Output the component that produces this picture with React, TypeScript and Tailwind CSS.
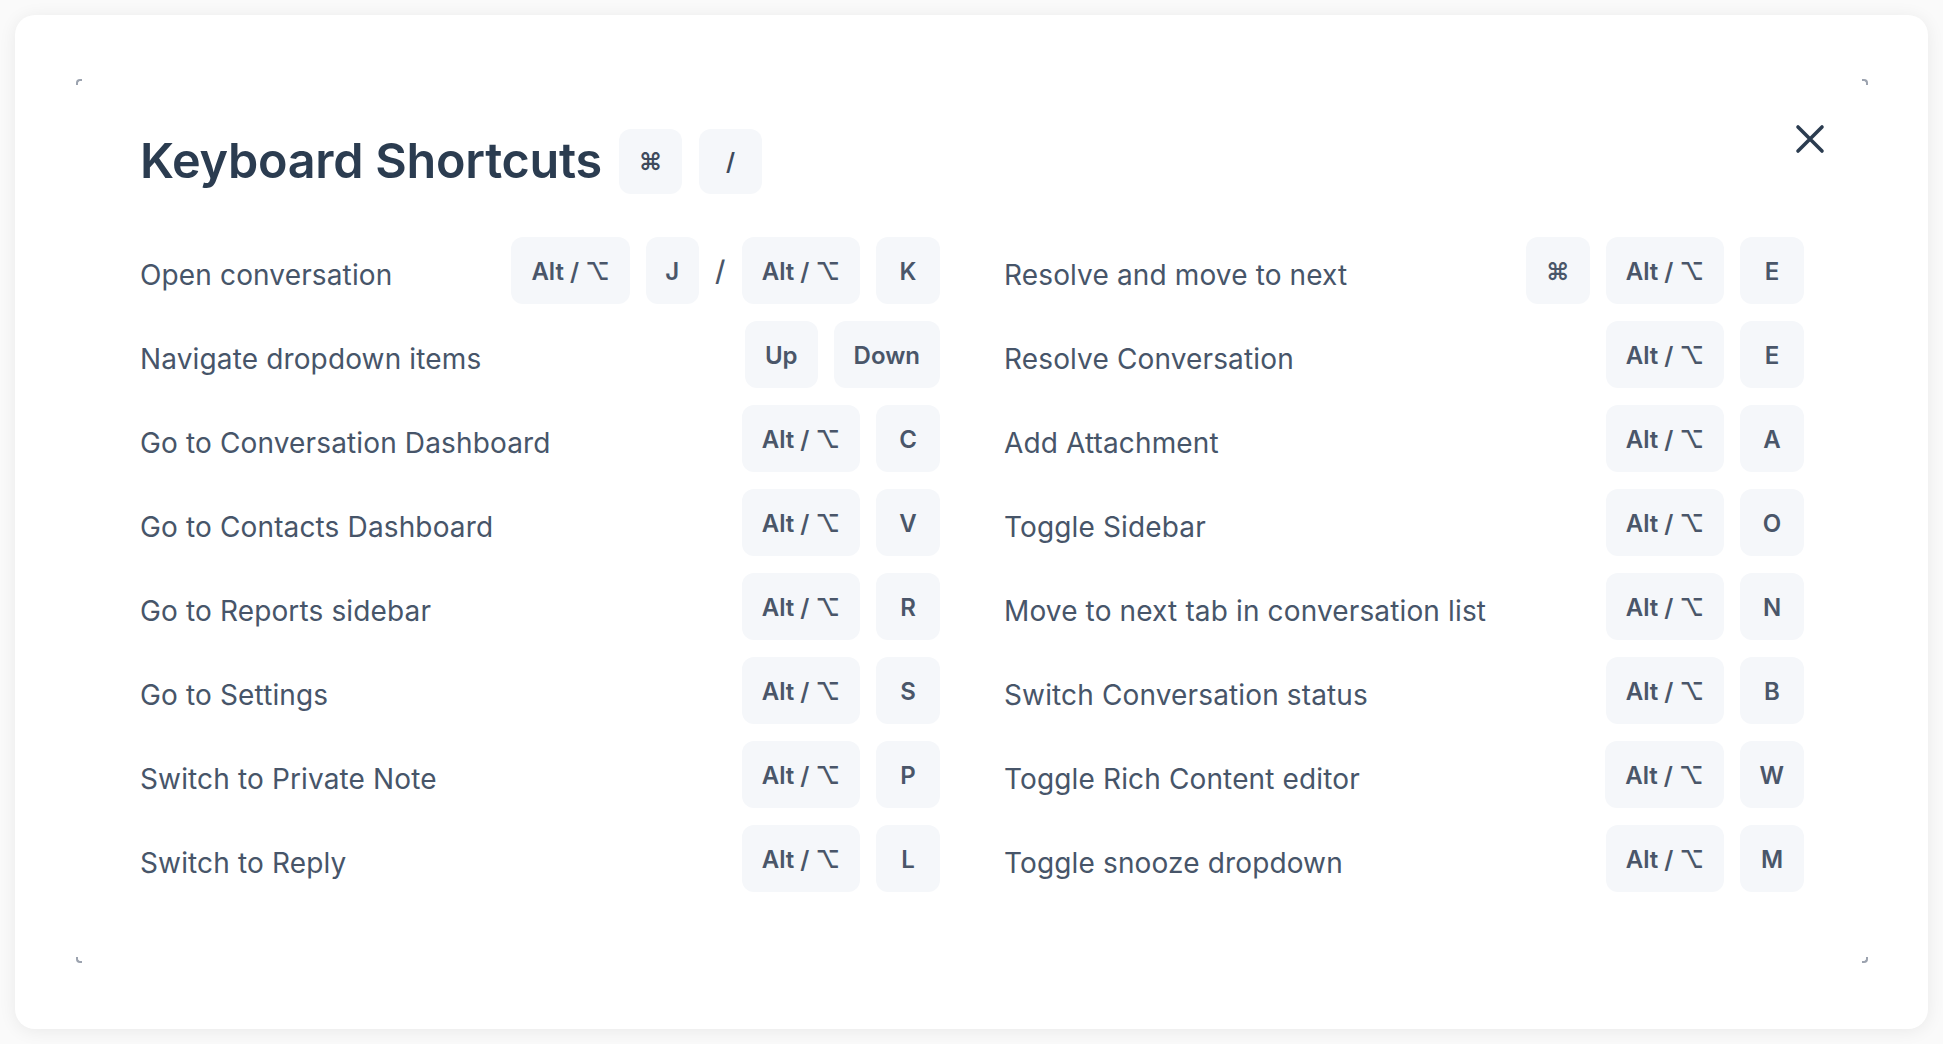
import { type ReactNode } from "react";

type Row = { label: string; keys: ReactNode };

const font = { fontFamily: "Inter, 'Noto Sans', sans-serif" };

function Key({ children, narrow }: { children: ReactNode; narrow?: boolean }) {
  return (
    <span
      className={
        "flex h-[67px] items-center justify-center rounded-[12px] bg-[#f5f7fa] pt-[2px] text-[24px] font-semibold text-[#4a5669] " +
        (narrow ? "w-[53px]" : "min-w-[64px] px-[20px]")
      }
    >
      {children}
    </span>
  );
}

const ALT = "Alt / ⌥";

function altKey(letter: string) {
  return (
    <>
      <Key>{ALT}</Key>
      <Key>{letter}</Key>
    </>
  );
}

const LEFT: Row[] = [
  {
    label: "Open conversation",
    keys: (
      <>
        <Key>{ALT}</Key>
        <Key narrow>J</Key>
        <span className="w-[11px] text-center text-[28px] font-medium text-[#4a5669]">/</span>
        <Key>{ALT}</Key>
        <Key>K</Key>
      </>
    ),
  },
  {
    label: "Navigate dropdown items",
    keys: (
      <>
        <Key>Up</Key>
        <Key>Down</Key>
      </>
    ),
  },
  { label: "Go to Conversation Dashboard", keys: altKey("C") },
  { label: "Go to Contacts Dashboard", keys: altKey("V") },
  { label: "Go to Reports sidebar", keys: altKey("R") },
  { label: "Go to Settings", keys: altKey("S") },
  { label: "Switch to Private Note", keys: altKey("P") },
  { label: "Switch to Reply", keys: altKey("L") },
];

const RIGHT: Row[] = [
  {
    label: "Resolve and move to next",
    keys: (
      <>
        <Key>⌘</Key>
        <Key>{ALT}</Key>
        <Key>E</Key>
      </>
    ),
  },
  { label: "Resolve Conversation", keys: altKey("E") },
  { label: "Add Attachment", keys: altKey("A") },
  { label: "Toggle Sidebar", keys: altKey("O") },
  { label: "Move to next tab in conversation list", keys: altKey("N") },
  { label: "Switch Conversation status", keys: altKey("B") },
  { label: "Toggle Rich Content editor", keys: altKey("W") },
  { label: "Toggle snooze dropdown", keys: altKey("M") },
];

function ShortcutColumn({ rows }: { rows: Row[] }) {
  return (
    <div className="flex flex-col gap-[17px]">
      {rows.map((r) => (
        <div key={r.label} className="flex h-[67px] items-center justify-between">
          <span className="pt-[9px] text-[28px] leading-none tracking-[0.005em] text-[#475569]">{r.label}</span>
          <div className="flex items-center gap-4">{r.keys}</div>
        </div>
      ))}
    </div>
  );
}

function CornerMarks() {
  const mark = "absolute h-[6px] w-[6px] border-[#9ca3af]";
  return (
    <div className="pointer-events-none absolute left-[61px] right-[60px] top-[64px] bottom-[66px]">
      <span className={mark + " left-0 top-0 rounded-tl-[4px] border-l-2 border-t-2"} />
      <span className={mark + " right-0 top-0 rounded-tr-[4px] border-r-2 border-t-2"} />
      <span className={mark + " bottom-0 left-0 rounded-bl-[4px] border-b-2 border-l-2"} />
      <span className={mark + " bottom-0 right-0 rounded-br-[4px] border-b-2 border-r-2"} />
    </div>
  );
}

export default function App() {
  return (
    <div className="min-h-screen w-full bg-[#fafafa] p-[15px]" style={font}>
      <div className="relative h-[1014px] rounded-[20px] bg-white pb-[137px] pl-[125px] pr-[124px] pt-[114px] shadow-[0_2px_18px_rgba(0,0,0,0.07)]">
        <CornerMarks />

        <button className="absolute right-[102px] top-[108px] flex h-[32px] w-[32px] items-center justify-center text-[#2b3c50]">
          <svg width="30" height="30" viewBox="0 0 30 30" fill="none">
            <path d="M3 3L27 27M27 3L3 27" stroke="currentColor" strokeWidth="3.6" strokeLinecap="round" />
          </svg>
        </button>

        <div className="flex h-[65px] items-center gap-[17px]">
          <h2 className="text-[48.5px] font-semibold leading-none tracking-[-0.005em] text-[#2b3c50]">
            Keyboard Shortcuts
          </h2>
          <div className="flex items-center gap-[17px]">
            <span className="flex h-[65px] w-[63px] items-center justify-center rounded-[12px] bg-[#f5f7fa] text-[24px] font-semibold text-[#3e4a5c]">
              ⌘
            </span>
            <span className="flex h-[65px] w-[63px] items-center justify-center rounded-[12px] bg-[#f5f7fa] text-[24px] font-semibold text-[#3e4a5c]">
              /
            </span>
          </div>
        </div>

        <div className="mt-[43px] grid grid-cols-2 gap-x-[64px]">
          <ShortcutColumn rows={LEFT} />
          <ShortcutColumn rows={RIGHT} />
        </div>
      </div>
    </div>
  );
}
